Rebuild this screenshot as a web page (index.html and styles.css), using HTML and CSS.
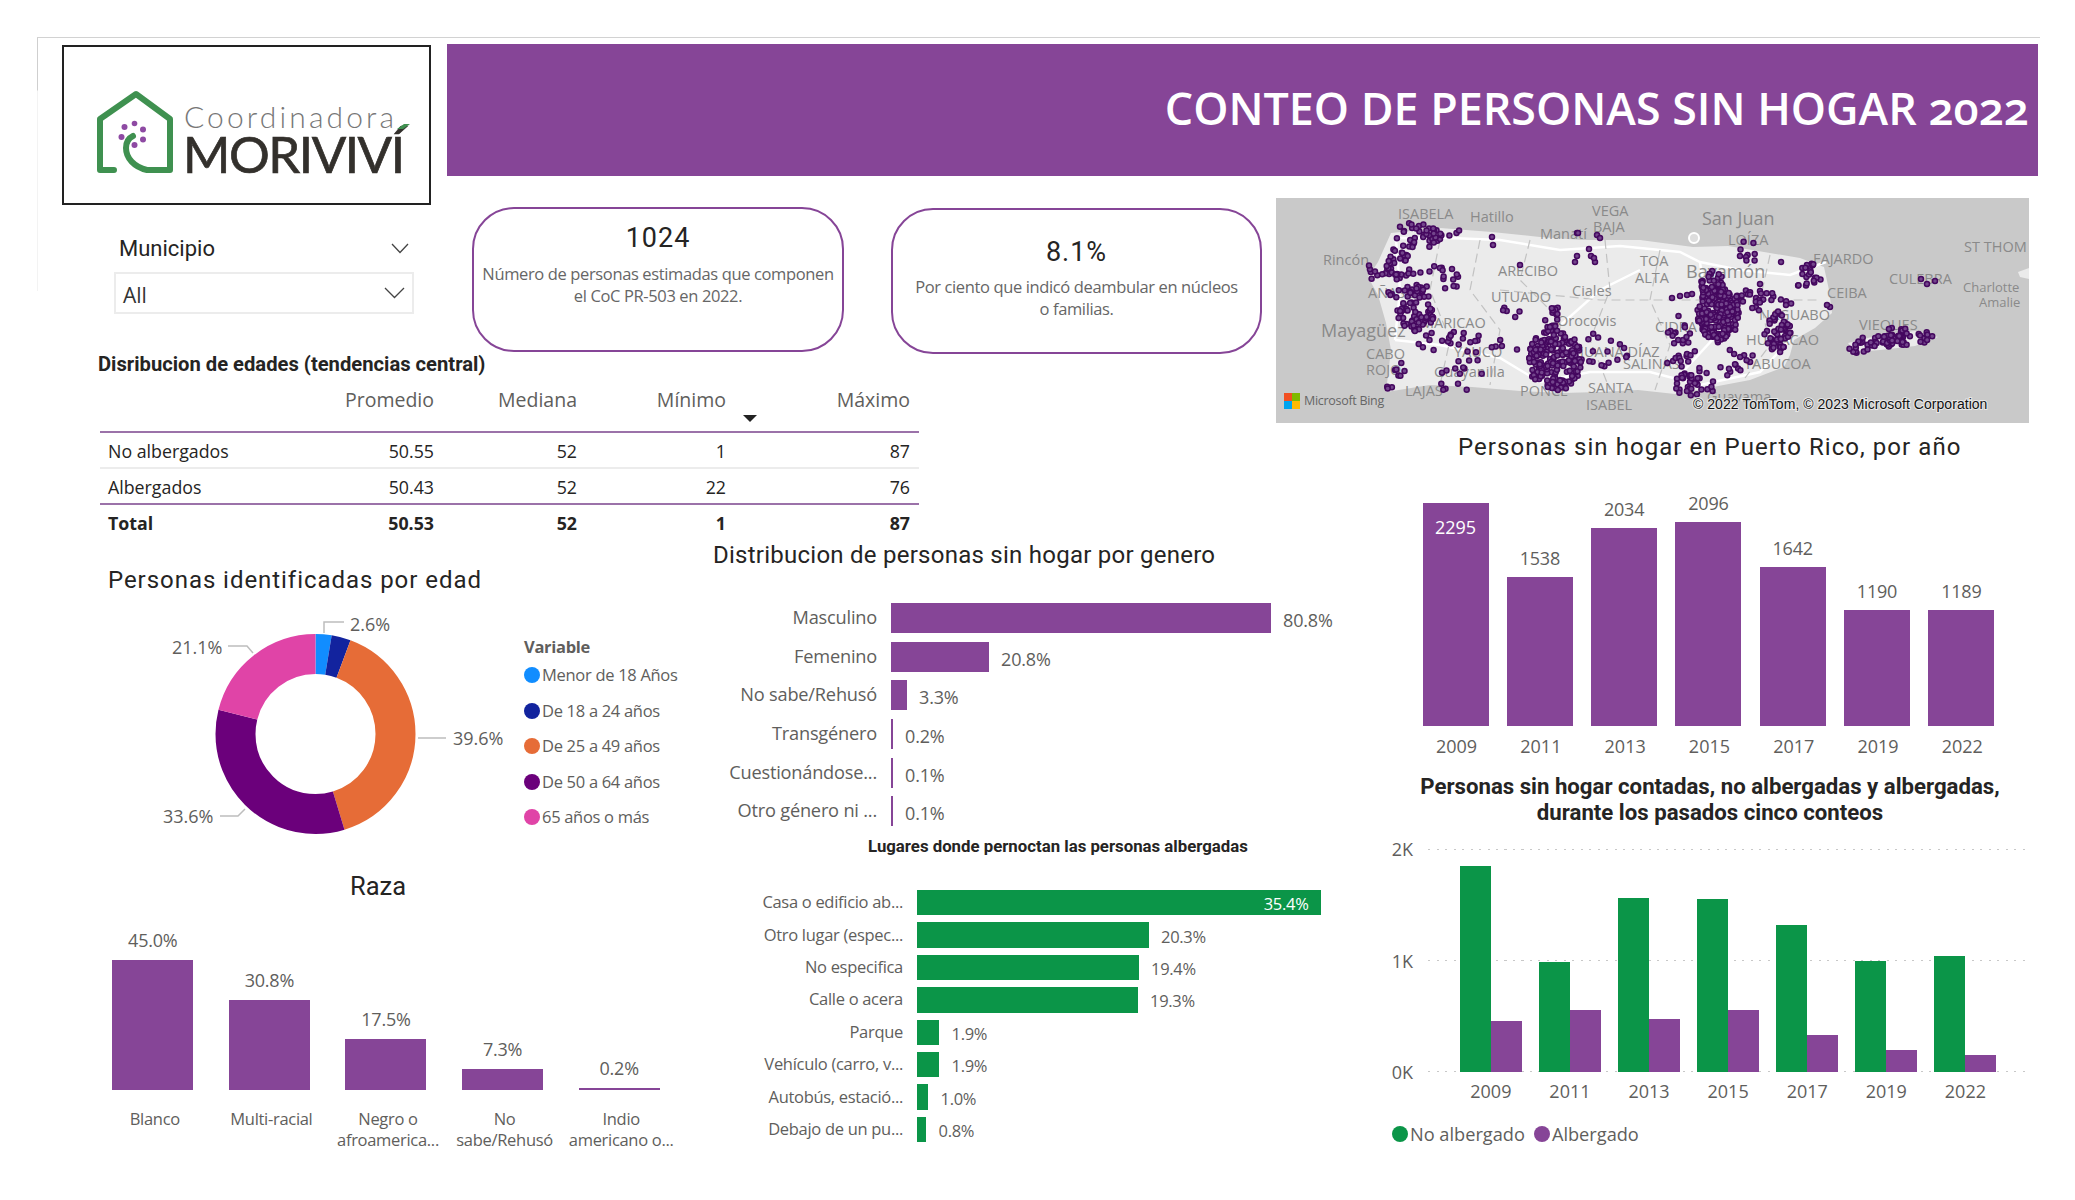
FILE: index.html
```html
<!DOCTYPE html>
<html lang="es">
<head>
<meta charset="utf-8">
<title>Conteo de personas sin hogar 2022</title>
<link rel="stylesheet" href="styles.css">
</head>
<body>
<div class="report">
  <header class="topbar">
    <div class="logo">
      <svg class="logo-svg" viewBox="62 45 369 159" width="369" height="159">
        <path class="logo-house" d="M114 170H100V119L136 94L170 119V170H147C134 167 126 158 126 148C126 142 129 138 133 136"/>
        <circle class="logo-dot" cx="124.500" cy="127" r="3"/>
        <circle class="logo-dot" cx="134.500" cy="123.500" r="2.800"/>
        <circle class="logo-dot" cx="143" cy="129.500" r="3"/>
        <circle class="logo-dot" cx="121.500" cy="137" r="3"/>
        <circle class="logo-dot" cx="143" cy="139.500" r="3"/>
        <circle class="logo-dot" cx="134.500" cy="145" r="3"/>
        <text class="logo-top" x="184" y="128" textLength="210">Coordinadora</text>
        <text class="logo-main" x="183" y="172.500" textLength="222">MORIVIVÍ</text>
        <path class="logo-accent" d="M397 129L404 124H410L403 129Z"/>
      </svg>
    </div>
    <div class="banner"><h1 class="banner-title">CONTEO DE PERSONAS SIN HOGAR 2022</h1></div>
  </header>

  <main class="body">
    <div class="left">
      <section class="intro">
        <div class="filter">
          <div class="filter-head">
            <span class="filter-name">Municipio</span>
            <svg class="chev" width="18" height="11" viewBox="0 0 18 11"><path d="M1 1L9 9.500L17 1"/></svg>
          </div>
          <div class="filter-box">
            <span>All</span>
            <svg class="chev" width="21" height="12" viewBox="0 0 21 12"><path d="M1 1L10.500 10.500L20 1"/></svg>
          </div>
        </div>
        <div class="card card-a">
          <div class="card-value">1024</div>
          <p class="card-text">Número de personas estimadas que componen el CoC PR-503 en 2022.</p>
        </div>
        <div class="card card-b">
          <div class="card-value">8.1%</div>
          <p class="card-text">Por ciento que indicó deambular en núcleos o familias.</p>
        </div>
      </section>

      <section class="stats">
        <h2 class="stats-title">Disribucion de edades (tendencias central)</h2>
        <div class="stats-table">
          <div class="stats-row stats-head">
            <span></span><span>Promedio</span><span>Mediana</span><span class="sorted">Mínimo</span><span>Máximo</span>
          </div>
          <div class="stats-row stats-first">
            <span>No albergados</span><span>50.55</span><span>52</span><span>1</span><span>87</span>
          </div>
          <div class="stats-row stats-second">
            <span>Albergados</span><span>50.43</span><span>52</span><span>22</span><span>76</span>
          </div>
          <div class="stats-row stats-total">
            <span>Total</span><span>50.53</span><span>52</span><span>1</span><span>87</span>
          </div>
        </div>
      </section>

      <section class="lower">
        <div class="col-a">
          <h2 class="din-title donut-title">Personas identificadas por edad</h2>
          <div class="donut-row">
            <svg class="donut" viewBox="160 610 360 230" width="360" height="230">
              <g class="donut-ring" transform="rotate(-90 315.500 733)">
                <circle cx="315.500" cy="733" r="80" pathLength="100" stroke="#118DFF" stroke-dasharray="2.600 97.400"/>
                <circle cx="315.500" cy="733" r="80" pathLength="100" stroke="#12239E" stroke-dasharray="3.100 96.900" stroke-dashoffset="-2.600"/>
                <circle cx="315.500" cy="733" r="80" pathLength="100" stroke="#E66C37" stroke-dasharray="39.600 60.400" stroke-dashoffset="-5.700"/>
                <circle cx="315.500" cy="733" r="80" pathLength="100" stroke="#6B007B" stroke-dasharray="33.600 66.400" stroke-dashoffset="-45.300"/>
                <circle cx="315.500" cy="733" r="80" pathLength="100" stroke="#E044A7" stroke-dasharray="21.100 78.900" stroke-dashoffset="-78.900"/>
              </g>
              <path class="leader" d="M324 632V621H344"/>
              <path class="leader" d="M228 645H247L253 652"/>
              <path class="leader" d="M418 737H446"/>
              <path class="leader" d="M220 815H238L245 808"/>
              <text class="donut-label" x="350" y="630">2.6%</text>
              <text class="donut-label" x="172" y="653">21.1%</text>
              <text class="donut-label" x="453" y="744">39.6%</text>
              <text class="donut-label" x="163" y="822">33.6%</text>
            </svg>
            <div class="legend">
              <div class="legend-title">Variable</div>
              <div class="legend-item"><i class="dot dot-blue"></i>Menor de 18 Años</div>
              <div class="legend-item"><i class="dot dot-navy"></i>De 18 a 24 años</div>
              <div class="legend-item"><i class="dot dot-orange"></i>De 25 a 49 años</div>
              <div class="legend-item"><i class="dot dot-violet"></i>De 50 a 64 años</div>
              <div class="legend-item"><i class="dot dot-pink"></i>65 años o más</div>
            </div>
          </div>
          <h2 class="din-title raza-title">Raza</h2>
          <div class="raza">
            <div class="raza-col"><div class="raza-plot"><span class="val">45.0%</span><div class="vbar" style="height:130px"></div></div><div class="raza-cat">Blanco</div></div>
            <div class="raza-col"><div class="raza-plot"><span class="val">30.8%</span><div class="vbar" style="height:90px"></div></div><div class="raza-cat">Multi-racial</div></div>
            <div class="raza-col"><div class="raza-plot"><span class="val">17.5%</span><div class="vbar" style="height:51px"></div></div><div class="raza-cat">Negro o<br>afroamerica...</div></div>
            <div class="raza-col"><div class="raza-plot"><span class="val">7.3%</span><div class="vbar" style="height:21px"></div></div><div class="raza-cat">No<br>sabe/Rehusó</div></div>
            <div class="raza-col"><div class="raza-plot"><span class="val">0.2%</span><div class="vbar" style="height:2px"></div></div><div class="raza-cat">Indio<br>americano o...</div></div>
          </div>
        </div>

        <div class="col-b">
          <h2 class="din-title gender-title">Distribucion de personas sin hogar por genero</h2>
          <div class="hbars hbars-gender">
            <div class="hrow"><span class="hcat">Masculino</span><div class="hbar" style="width:380px"></div><span class="hval">80.8%</span></div>
            <div class="hrow"><span class="hcat">Femenino</span><div class="hbar" style="width:98px"></div><span class="hval">20.8%</span></div>
            <div class="hrow"><span class="hcat">No sabe/Rehusó</span><div class="hbar" style="width:16px"></div><span class="hval">3.3%</span></div>
            <div class="hrow"><span class="hcat">Transgénero</span><div class="hbar" style="width:2px"></div><span class="hval">0.2%</span></div>
            <div class="hrow"><span class="hcat">Cuestionándose...</span><div class="hbar" style="width:2px"></div><span class="hval">0.1%</span></div>
            <div class="hrow"><span class="hcat">Otro género ni ...</span><div class="hbar" style="width:2px"></div><span class="hval">0.1%</span></div>
          </div>
          <h2 class="places-title">Lugares donde pernoctan las personas albergadas</h2>
          <div class="hbars hbars-places">
            <div class="hrow"><span class="hcat">Casa o edificio ab...</span><div class="hbar green" style="width:403.500px"><span class="hval-in">35.4%</span></div></div>
            <div class="hrow"><span class="hcat">Otro lugar (espec...</span><div class="hbar green" style="width:231.500px"></div><span class="hval">20.3%</span></div>
            <div class="hrow"><span class="hcat">No especifica</span><div class="hbar green" style="width:221.500px"></div><span class="hval">19.4%</span></div>
            <div class="hrow"><span class="hcat">Calle o acera</span><div class="hbar green" style="width:220.500px"></div><span class="hval">19.3%</span></div>
            <div class="hrow"><span class="hcat">Parque</span><div class="hbar green" style="width:22px"></div><span class="hval">1.9%</span></div>
            <div class="hrow"><span class="hcat">Vehículo (carro, v...</span><div class="hbar green" style="width:22px"></div><span class="hval">1.9%</span></div>
            <div class="hrow"><span class="hcat">Autobús, estació...</span><div class="hbar green" style="width:11px"></div><span class="hval">1.0%</span></div>
            <div class="hrow"><span class="hcat">Debajo de un pu...</span><div class="hbar green" style="width:9px"></div><span class="hval">0.8%</span></div>
          </div>
        </div>
      </section>
    </div>

    <aside class="right">
      <div class="map">
        <svg id="map-svg" class="map-svg" viewBox="1276 198 753 225" width="753" height="225">
          <rect class="map-sea" x="1276" y="198" width="753" height="225"/>
          <path class="map-land" d="M1368 277L1378 262L1391 233L1440 228L1492 232L1540 237L1582 240L1640 240L1693 247L1728 246L1764 252L1800 258L1824 267L1829 290L1832 313L1815 328L1794 340L1790 355L1784 367L1750 380L1713 387L1675 394L1638 390L1600 392L1562 393L1520 391L1472 387L1430 385L1386 392L1391 350L1386 323L1378 295Z"/>
          <path class="map-land" d="M1848 343L1880 335L1915 331L1938 337L1915 346L1880 350L1855 352Z"/>
          <path class="map-land" d="M2018 272L2029 268V279L2020 277Z"/>
          <g class="map-roads">
            <path d="M1395 238L1450 238L1500 240L1560 250L1620 246L1680 252L1700 262L1740 270L1790 275L1826 262"/>
            <path d="M1395 340L1440 345L1500 358L1540 382L1590 372L1650 372L1700 385L1760 372L1790 340"/>
            <path d="M1700 262L1705 300L1712 340L1680 375"/>
            <path d="M1540 382L1555 330L1600 290L1640 270"/>
            <path d="M1396 240L1400 290L1395 340"/>
          </g>
          <g class="map-borders">
            <path d="M1480 240L1470 290L1500 330L1490 385"/>
            <path d="M1530 240L1520 280L1560 320L1560 385"/>
            <path d="M1605 240L1610 290L1590 340L1610 390"/>
            <path d="M1660 250L1650 300L1670 345L1655 390"/>
            <path d="M1440 240L1430 290L1450 340L1440 385"/>
            <path d="M1770 255L1760 300L1770 345L1745 378"/>
            <path d="M1500 290L1600 300L1700 300L1820 300"/>
          </g>
          <circle class="map-pin" cx="1694" cy="238" r="5"/>
          <g class="map-labels">
            <text x="1398" y="219">ISABELA</text>
            <text x="1470" y="222">Hatillo</text>
            <text x="1592" y="216">VEGA</text>
            <text x="1593" y="232">BAJA</text>
            <text class="map-big" x="1702" y="225">San Juan</text>
            <text x="1728" y="245">LOÍZA</text>
            <text x="1540" y="239">Manatí</text>
            <text x="1323" y="265">Rincón</text>
            <text x="1498" y="276">ARECIBO</text>
            <text x="1640" y="266">TOA</text>
            <text x="1635" y="283">ALTA</text>
            <text class="map-big" x="1686" y="278">Bayamón</text>
            <text x="1813" y="264">FAJARDO</text>
            <text x="1964" y="252">ST THOM</text>
            <text x="1889" y="284">CULEBRA</text>
            <text class="map-small" x="1963" y="292">Charlotte</text>
            <text class="map-small" x="1979" y="307">Amalie</text>
            <text x="1491" y="302">UTUADO</text>
            <text x="1572" y="296">Ciales</text>
            <text x="1827" y="298">CEIBA</text>
            <text x="1368" y="298">AÑASCO</text>
            <text class="map-big" x="1321" y="337">Mayagüez</text>
            <text x="1421" y="328">MARICAO</text>
            <text x="1557" y="326">Orocovis</text>
            <text x="1655" y="332">CIDRA</text>
            <text x="1759" y="320">NAGUABO</text>
            <text x="1746" y="345">HUMACAO</text>
            <text x="1859" y="330">VIEQUES</text>
            <text x="1454" y="357">YAUCO</text>
            <text x="1366" y="359">CABO</text>
            <text x="1366" y="375">ROJO</text>
            <text x="1434" y="377">Guayanilla</text>
            <text x="1580" y="357">JUANA DÍAZ</text>
            <text x="1623" y="369">SALINAS</text>
            <text x="1744" y="369">YABUCOA</text>
            <text x="1405" y="396">LAJAS</text>
            <text x="1520" y="396">PONCE</text>
            <text x="1588" y="393">SANTA</text>
            <text x="1586" y="410">ISABEL</text>
            <text x="1707" y="402">Guayama</text>
          </g>
          <g id="map-dots" class="map-dots"></g>
          <rect x="1284" y="393" width="8" height="8" fill="#F25022"/>
          <rect x="1292" y="393" width="8" height="8" fill="#7FBA00"/>
          <rect x="1284" y="401" width="8" height="8" fill="#00A4EF"/>
          <rect x="1292" y="401" width="8" height="8" fill="#FFB900"/>
          <text class="map-bing" x="1304" y="405">Microsoft Bing</text>
          <text class="map-copy" x="1693" y="409">© 2022 TomTom, © 2023 Microsoft Corporation</text>
        </svg>
      </div>

      <h2 class="din-title year-title">Personas sin hogar en Puerto Rico, por año</h2>
      <div class="years">
        <div class="year-col"><div class="vbar year-bar year-bar-in" style="height:223.500px"><span class="val-in">2295</span></div></div>
        <div class="year-col"><span class="val">1538</span><div class="vbar year-bar" style="height:149.500px"></div></div>
        <div class="year-col"><span class="val">2034</span><div class="vbar year-bar" style="height:198px"></div></div>
        <div class="year-col"><span class="val">2096</span><div class="vbar year-bar" style="height:204px"></div></div>
        <div class="year-col"><span class="val">1642</span><div class="vbar year-bar" style="height:159.500px"></div></div>
        <div class="year-col"><span class="val">1190</span><div class="vbar year-bar" style="height:116px"></div></div>
        <div class="year-col"><span class="val">1189</span><div class="vbar year-bar" style="height:116px"></div></div>
      </div>
      <div class="year-axis">
        <span>2009</span><span>2011</span><span>2013</span><span>2015</span><span>2017</span><span>2019</span><span>2022</span>
      </div>

      <h2 class="pair-title">Personas sin hogar contadas, no albergadas y albergadas,<br>durante los pasados cinco conteos</h2>
      <div class="pair">
        <div class="pair-y"><span>2K</span><span>1K</span><span>0K</span></div>
        <div class="pair-plot">
          <div class="grid-lines"><i></i><i></i><i></i></div>
          <div class="pair-groups">
            <div class="pair-group"><div class="pbar green" style="height:206px"></div><div class="pbar" style="height:51px"></div></div>
            <div class="pair-group"><div class="pbar green" style="height:110px"></div><div class="pbar" style="height:62px"></div></div>
            <div class="pair-group"><div class="pbar green" style="height:174px"></div><div class="pbar" style="height:53px"></div></div>
            <div class="pair-group"><div class="pbar green" style="height:173px"></div><div class="pbar" style="height:62px"></div></div>
            <div class="pair-group"><div class="pbar green" style="height:147px"></div><div class="pbar" style="height:37px"></div></div>
            <div class="pair-group"><div class="pbar green" style="height:111px"></div><div class="pbar" style="height:22px"></div></div>
            <div class="pair-group"><div class="pbar green" style="height:116px"></div><div class="pbar" style="height:17px"></div></div>
          </div>
        </div>
      </div>
      <div class="pair-axis">
        <span>2009</span><span>2011</span><span>2013</span><span>2015</span><span>2017</span><span>2019</span><span>2022</span>
      </div>
      <div class="pair-legend">
        <span class="pair-key"><i class="dot dot-green"></i>No albergado</span>
        <span class="pair-key"><i class="dot dot-purple"></i>Albergado</span>
      </div>
    </aside>
  </main>
</div>
<script src="map.js"></script>
</body>
</html>
```

FILE: styles.css
```css
html, body {
  margin: 0;
  height: 1200px;
  overflow: hidden;
  background: #fff;
}
body {
  font-family: "Open Sans", "Noto Sans", sans-serif;
  color: #605e5c;
}
h1, h2, p { margin: 0; font-weight: normal; }

.report {
  position: relative;
  margin: 37px 35px 0 37px;
  padding-left: 25px;
  border-top: 1px solid #d2d2d2;
  width: 1978px;
}
.report::before {
  content: "";
  position: absolute;
  left: 0;
  top: 0;
  width: 1px;
  height: 253px;
  background: linear-gradient(#cfcfcf 0, #cfcfcf 52px, #f3f3f3 53px, #f3f3f3 100%);
}

/* top */
.topbar {
  display: flex;
  align-items: flex-start;
  height: 160px;
  padding-top: 6px;
  box-sizing: border-box;
}
.logo {
  flex: none;
  width: 369px;
  height: 160px;
  margin-top: 1px;
  border: 2px solid #222;
  box-sizing: border-box;
  background: #fff;
  overflow: hidden;
}
.logo-svg { display: block; margin: -2px; }
.logo-house { fill: none; stroke: #3f9150; stroke-width: 6; stroke-linejoin: round; stroke-linecap: round; }
.logo-dot { fill: #8e4aa3; }
.logo-top { font-family: Lato, sans-serif; font-weight: 300; font-size: 30px; fill: #777; }
.logo-main { font-family: Lato, sans-serif; font-weight: 400; font-size: 51px; fill: #33302c; stroke: #33302c; stroke-width: .7px; }
.logo-accent { fill: #3f9150; }
.banner {
  flex: none;
  width: 1591px;
  height: 132px;
  margin-left: 16px;
  background: #864597;
  display: flex;
  align-items: center;
  justify-content: flex-end;
  padding-right: 9px;
  box-sizing: border-box;
}
.banner-title {
  font-family: "Open Sans", sans-serif;
  font-weight: 600;
  font-size: 44.800px;
  color: #fff;
  line-height: 1;
  font-variant-numeric: oldstyle-nums;
  white-space: nowrap;
  position: relative;
  top: -2px;
}

/* body */
.body { display: flex; }
.left { flex: none; width: 1214px; }
.right { flex: none; width: 754px; }

.intro { display: flex; height: 154px; align-items: flex-start; }
.filter { flex: none; width: 300px; margin-left: 52px; padding-top: 34px; }
.filter-head {
  display: flex;
  justify-content: space-between;
  align-items: center;
  height: 33px;
  padding-left: 5px;
  padding-right: 5px;
  font-family: Roboto, sans-serif;
  font-size: 22px;
  color: #252423;
}
.filter-box {
  margin-top: 7px;
  height: 42px;
  box-sizing: border-box;
  border: 2px solid #ececec;
  display: flex;
  align-items: center;
  justify-content: space-between;
  padding: 4px 7px 0 7px;
  font-size: 21px;
  color: #333;
}
.filter-box .chev { position: relative; top: -2px; }
.chev { fill: none; stroke: #444; stroke-width: 1.300; }
.card {
  flex: none;
  box-sizing: border-box;
  border: 2px solid #864597;
  border-radius: 42px;
  text-align: center;
}
.card-a { width: 372px; height: 145px; margin: 9px 0 0 58px; padding-top: 12px; }
.card-b { width: 371px; height: 146px; margin: 10px 0 0 47px; padding-top: 25px; }
.card-value {
  font-family: Roboto, sans-serif;
  font-size: 27px;
  line-height: 34px;
  letter-spacing: 1px;
  color: #252423;
}
.card-text {
  font-size: 16.500px;
  line-height: 21.500px;
  letter-spacing: -.37px;
  color: #666;
  margin-top: 8px;
  padding: 0 6px;
}
.card-b .card-text { padding: 0 18px; margin-top: 7px; }

.stats-title {
  font-family: Roboto, sans-serif;
  font-weight: 700;
  font-size: 20.200px;
  line-height: 24px;
  color: #252423;
  margin-left: 36px;
}
.stats-table { width: 819px; margin-left: 38px; color: #252423; }
.stats-row {
  display: grid;
  grid-template-columns: 200px 144px 143px 149px 183px;
  font-size: 17.800px;
  align-items: center;
}
.stats-row span { text-align: right; padding-right: 10px; }
.stats-row span:last-child { padding-right: 9px; }
.stats-row span:first-child { text-align: left; padding-left: 8px; padding-right: 0; }
.stats-head {
  height: 57px;
  padding-bottom: 9px;
  box-sizing: border-box;
  border-bottom: 2px solid #9b72a9;
  font-size: 19.500px;
  color: #605e5c;
}
.sorted { position: relative; }
.sorted::after {
  content: "";
  position: absolute;
  right: -21px;
  top: 29px;
  border: 7px solid transparent;
  border-top: 7px solid #222;
  border-bottom: 0;
}
.stats-first { height: 36px; padding-top: 1px; border-bottom: 2px solid #ececec; box-sizing: border-box; }
.stats-second { height: 36px; padding-top: 1px; border-bottom: 2px solid #9b72a9; box-sizing: border-box; }
.stats-total { height: 36px; font-weight: 700; }

.lower { display: flex; }
.col-a { flex: none; width: 638px; }
.col-b { flex: none; width: 576px; }
.din-title {
  font-family: Roboto, sans-serif;
  font-size: 24px;
  line-height: 34px;
  color: #252423;
}
.donut-title { margin: 21.500px 0 0 46px; letter-spacing: .95px; }
.donut-row { display: flex; margin-top: 14px; height: 258px; }
.donut { flex: none; margin-left: 98px; display: block; }
.donut-ring circle { fill: none; stroke-width: 40; }
.leader { fill: none; stroke: #bdbdbd; stroke-width: 1.500; }
.donut-label { font-size: 18px; fill: #605e5c; }
.legend { margin-left: 4px; padding-top: 24px; font-size: 16.500px; letter-spacing: -.3px; }
.legend-title { font-weight: 700; line-height: 24px; margin-bottom: -1px; }
.legend-item { display: flex; align-items: center; height: 35.500px; line-height: 24px; }
.dot { flex: none; display: block; width: 16px; height: 16px; border-radius: 50%; margin-right: 2px; }
.dot-blue { background: #118dff; }
.dot-navy { background: #12239e; }
.dot-orange { background: #e66c37; }
.dot-violet { background: #6b007b; }
.dot-pink { background: #e044a7; }
.dot-green { background: #0b9548; }
.dot-purple { background: #864597; }

.raza-title { text-align: center; width: 632px; font-size: 25.500px; }
.raza { display: flex; margin-left: 32.500px; }
.raza-col { flex: none; width: 116.600px; }
.raza-plot {
  height: 187px;
  display: flex;
  flex-direction: column;
  justify-content: flex-end;
  align-items: center;
}
.vbar { width: 81px; background: #864597; flex: none; }
.val {
  font-size: 18px;
  line-height: 26px;
  margin-bottom: 6px;
  letter-spacing: -.2px;
}
.raza-plot .val { margin-bottom: 7px; }
.raza-cat {
  text-align: center;
  font-size: 16.500px;
  line-height: 21px;
  padding-left: 4px;
  margin-top: 18px;
  letter-spacing: -.3px;
  white-space: nowrap;
}

.gender-title { margin: -3px 0 0 13px; letter-spacing: .25px; }
.hbars { display: flex; flex-direction: column; }
.hbars-gender { margin-top: 31px; gap: 8.670px; font-size: 18px; letter-spacing: -.2px; }
.hbars-gender .hrow { height: 30px; }
.hbars-gender .hcat { width: 177px; margin-right: 13.600px; font-size: 18.200px; }
.hbars-places { margin-top: 32.700px; gap: 7px; font-size: 16.500px; letter-spacing: -.3px; }
.hbars-places .hrow { height: 25.400px; }
.hbars-places .hcat { width: 203px; margin-right: 14px; }
.hrow { display: flex; align-items: center; white-space: nowrap; }
.hcat { flex: none; text-align: right; position: relative; top: -1px; }
.hbar { flex: none; height: 100%; background: #864597; display: flex; align-items: center; justify-content: flex-end; }
.hbar.green { background: #0b9548; }
.hval { margin-left: 12.500px; position: relative; top: 2px; }
.hbars-places .hval { top: 1px; }
.hval-in { color: #fff; padding-right: 12px; position: relative; top: 1px; }
.places-title {
  font-family: Roboto, sans-serif;
  font-weight: 700;
  font-size: 16.800px;
  line-height: 22px;
  color: #252423;
  margin: 9px 0 0 168px;
  white-space: nowrap;
}

/* map */
.map { width: 753px; height: 225px; overflow: hidden; }
.map-svg { display: block; }
.map-sea { fill: #c9c9c9; }
.map-land { fill: #ebebeb; }
.map-pin { fill: #ddd; stroke: #fff; stroke-width: 2; }
.map-roads path { fill: none; stroke: #fff; stroke-width: 2.500; }
.map-borders path { fill: none; stroke: #c2c2c2; stroke-width: 1.200; stroke-dasharray: 9 5; }
.map-labels text { font-size: 14.500px; fill: #8a8a8a; font-family: "Open Sans", sans-serif; }
.map-labels .map-big { font-size: 18px; }
.map-labels .map-small { font-size: 13px; }
.map-dots circle { fill: #73458c; stroke: #45085f; stroke-width: 1.500; }
.map-bing { font-family: "Open Sans", sans-serif; font-size: 12.500px; letter-spacing: -.3px; fill: #666; }
.map-copy {
  font-family: "Liberation Sans", Arial, sans-serif;
  font-size: 14px;
  letter-spacing: .04px;
  fill: #111;
  paint-order: stroke;
  stroke: #e8e8e8;
  stroke-width: 2px;
}

.year-title { margin: 7px 0 0 182px; letter-spacing: 1.050px; white-space: nowrap; }
.years {
  display: flex;
  height: 262px;
  margin-left: 137.400px;
  align-items: flex-end;
}
.year-col {
  flex: none;
  width: 84.300px;
  display: flex;
  flex-direction: column;
  align-items: center;
}
.year-bar { width: 66px; }
.year-bar-in { text-align: center; }
.val-in { display: block; color: #fff; font-size: 18px; line-height: 26px; margin-top: 11px; }
.year-axis {
  display: flex;
  margin: 7px 0 0 138.400px;
  font-size: 18px;
  line-height: 26px;
}
.year-axis span { width: 84.300px; text-align: center; flex: none; }

.pair-title {
  font-family: Roboto, sans-serif;
  font-weight: 700;
  font-size: 22.200px;
  line-height: 26px;
  color: #252423;
  text-align: center;
  width: 868px;
  margin-top: 14px;
  white-space: nowrap;
}
.pair { display: flex; margin-top: 24px; height: 223px; }
.pair-y {
  flex: none;
  width: 137px;
  padding-right: 0;
  display: flex;
  flex-direction: column;
  justify-content: space-between;
  text-align: right;
  font-size: 18px;
  line-height: 0;
}
.pair-y span { height: 0; }
.pair-plot { flex: none; width: 602px; margin-left: 15px; position: relative; }
.grid-lines {
  position: absolute;
  inset: 0;
  display: flex;
  flex-direction: column;
  justify-content: space-between;
}
.grid-lines i {
  display: block;
  height: 1px;
  background: repeating-linear-gradient(90deg, #c8c8c8 0 2px, transparent 2px 8.500px);
}
.pair-groups {
  position: absolute;
  inset: 0 0 0 32px;
  display: flex;
  align-items: flex-end;
  gap: 17.400px;
}
.pair-group { flex: none; width: 61.700px; display: flex; align-items: flex-end; }
.pbar { flex: 1; background: #864597; }
.pbar.green { background: #0b9548; }
.pair-axis {
  display: flex;
  margin: 6px 0 0 175.300px;
  font-size: 18px;
  line-height: 26px;
}
.pair-axis span { width: 79.100px; flex: none; text-align: center; }
.pair-legend {
  display: flex;
  gap: 9px;
  margin: 17px 0 0 116px;
  font-size: 18.200px;
  line-height: 26px;
}
.pair-key { display: flex; align-items: center; }
```

FILE: map.js
```js
(function () {
  var group = document.getElementById("map-dots");
  var ns = "http://www.w3.org/2000/svg";
  var seed = 20221;
  function rnd() {
    seed = (seed * 16807) % 2147483647;
    return (seed - 1) / 2147483646;
  }
  function add(x, y) {
    var c = document.createElementNS(ns, "circle");
    c.setAttribute("cx", x.toFixed(1));
    c.setAttribute("cy", y.toFixed(1));
    c.setAttribute("r", "2.5");
    group.appendChild(c);
  }
  /* centre x, centre y, radius x, radius y, number of points */
  var areas = [
    [1417, 236, 25, 14, 38], [1450, 235, 20, 5, 5], [1396, 266, 15, 17, 32],
    [1375, 271, 8, 9, 7], [1438, 278, 28, 12, 17], [1411, 291, 24, 9, 24],
    [1415, 315, 21, 16, 58], [1446, 340, 34, 10, 14], [1474, 348, 46, 15, 16],
    [1399, 369, 6, 8, 6], [1458, 372, 34, 5, 7], [1390, 387, 4, 5, 3],
    [1455, 387, 26, 5, 5], [1510, 313, 17, 6, 5], [1555, 360, 27, 31, 185],
    [1555, 316, 12, 14, 16], [1605, 350, 23, 20, 16], [1718, 315, 21, 29, 190],
    [1713, 285, 12, 14, 32], [1752, 296, 16, 7, 20], [1680, 331, 12, 18, 15],
    [1695, 383, 27, 13, 32], [1713, 363, 50, 14, 30], [1777, 333, 14, 20, 52],
    [1811, 278, 17, 15, 20], [1774, 303, 30, 10, 12], [1746, 251, 18, 11, 9],
    [1859, 345, 11, 8, 14], [1882, 342, 12, 7, 18], [1898, 337, 17, 10, 30],
    [1925, 338, 10, 6, 10]
  ];
  areas.forEach(function (a) {
    for (var i = 0; i < a[4]; i++) {
      var t = rnd() * Math.PI * 2;
      var d = Math.sqrt(rnd());
      add(a[0] + Math.cos(t) * d * a[2], a[1] + Math.sin(t) * d * a[3]);
    }
  });
  [[1577, 233], [1578, 233], [1597, 235], [1600, 238], [1589, 249], [1577, 256], [1575, 262],
   [1591, 256], [1595, 262], [1594, 258], [1921, 279], [1927, 284], [1935, 281],
   [1672, 298], [1680, 296], [1687, 295], [1692, 294], [1520, 265], [1492, 237], [1493, 245],
   [1781, 262], [1760, 284], [1830, 307], [1827, 305]
  ].forEach(function (p) { add(p[0], p[1]); });
})();
```
